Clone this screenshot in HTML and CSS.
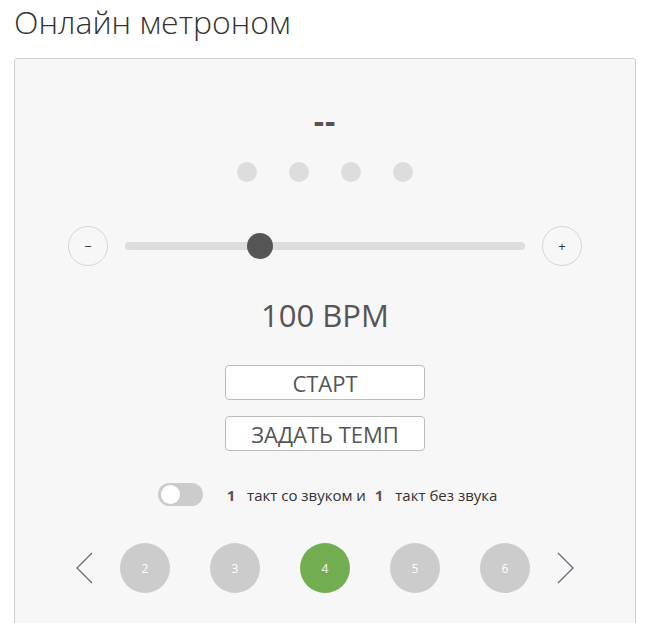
FILE: index.html
```html
<!DOCTYPE html>
<html>
<head>
    <title>Онлайн метроном</title>
    <link rel="stylesheet" href="styles.css">
</head>
<body>

    <h1 class="page-title">Онлайн метроном</h1>

    <div class="metronome">
        <!-- current beat -->
        <div class="beat-count">--</div>

        <div class="beat-dots">
            <span class="dot"></span>
            <span class="dot"></span>
            <span class="dot"></span>
            <span class="dot"></span>
        </div>

        <!-- tempo slider -->
        <div class="tempo-row">
            <button class="round-btn">&minus;</button>
            <div class="track">
                <span class="thumb" style="left: 33.7%;"></span>
            </div>
            <button class="round-btn">+</button>
        </div>

        <div class="bpm">100 BPM</div>

        <button class="wide-btn">СТАРТ</button>
        <button class="wide-btn second">ЗАДАТЬ ТЕМП</button>

        <div class="mute-row">
            <span class="switch"><span class="knob"></span></span>
            <span class="mute-text"><b>1</b> такт со звуком и <b class="off">1</b> такт без звука</span>
        </div>

        <!-- beats per bar -->
        <div class="bar-picker">
            <svg class="arrow prev" width="20" height="32" viewBox="0 0 20 32">
                <polyline points="17,1 2,16 17,31" fill="none" stroke="#6b6b78" stroke-width="1.3"/>
            </svg>
            <span class="num">2</span>
            <span class="num">3</span>
            <span class="num active">4</span>
            <span class="num">5</span>
            <span class="num">6</span>
            <svg class="arrow next" width="20" height="32" viewBox="0 0 20 32">
                <polyline points="3,1 18,16 3,31" fill="none" stroke="#6b6b78" stroke-width="1.3"/>
            </svg>
        </div>
    </div>

</body>
</html>
```

FILE: styles.css
```css
body { font-family: "Open Sans", sans-serif; margin: 0; padding: 0 14px; background: #fff; color: #333; }
.page-title { font-size: 32px; font-weight: 300; line-height: 44px; margin: 0; padding-left: 0; color: #333; }
.metronome { margin-top: 14px; background: #f7f7f7; border: 1px solid #d0d0d0; border-radius: 3px; padding: 46px 0 40px; display: flex; flex-direction: column; align-items: center; }
.beat-count { font-size: 32px; font-weight: 700; line-height: 32px; color: #555; letter-spacing: 1px; }
.beat-dots { display: flex; gap: 32px; margin-top: 25px; }
.dot { width: 20px; height: 20px; border-radius: 50%; background: #ddd; }
.tempo-row { display: grid; grid-template-columns: 40px 400px 40px; column-gap: 17px; align-items: center; margin-top: 44px; }
.round-btn { width: 40px; height: 40px; border-radius: 50%; border: 1px solid #d6d6d6; background: transparent; font-family: "Open Sans", sans-serif; font-size: 13px; color: #333; padding: 0; }
.track { position: relative; height: 8px; border-radius: 4px; background: #ddd; }
.thumb { position: absolute; top: -9px; width: 26px; height: 26px; margin-left: -13px; border-radius: 50%; background: #555; }
.bpm { font-size: 31px; color: #555; margin-top: 28px; line-height: 42px; }
.wide-btn { width: 200px; height: 35px; margin-top: 29px; background: #fff; border: 1px solid #bbb; border-radius: 4px; font-family: "Open Sans", sans-serif; font-size: 22px; color: #555; padding: 0; }
.wide-btn.second { margin-top: 16px; }
.mute-row { display: flex; align-items: center; gap: 24px; margin-top: 32px; margin-left: 5px; font-size: 15px; color: #333; }
.mute-text b { color: #555; margin: 0 8px 0 0; }
.mute-text b.off { margin: 0 8px 0 5px; }
.switch { position: relative; width: 45px; height: 23px; border-radius: 12px; background: #ccc; }
.knob { position: absolute; left: 3px; top: 2px; width: 19px; height: 19px; border-radius: 50%; background: #fff; }
.bar-picker { display: flex; align-items: center; gap: 40px; margin-top: 37px; }
.bar-picker .prev { margin: 0 -15px 0 -10px; }
.bar-picker .next { margin: 0 -10px 0 -15px; }
.num { width: 50px; height: 50px; border-radius: 50%; background: #ccc; color: #fff; font-size: 12px; display: flex; align-items: center; justify-content: center; }
.num.active { background: #72ad51; }
```
